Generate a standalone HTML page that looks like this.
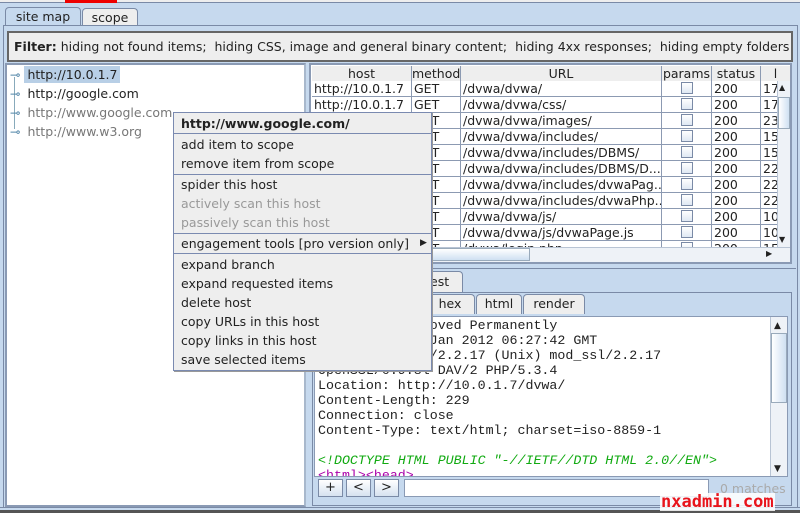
<!DOCTYPE html>
<html><head><meta charset="utf-8"><style>
*{margin:0;padding:0;box-sizing:border-box}
body{width:800px;height:513px;overflow:hidden;background:#c6d9ee;font-family:"DejaVu Sans","Liberation Sans",sans-serif;font-size:12px;color:#222;position:relative}
.a{position:absolute}
.t{white-space:nowrap}
.tab{position:absolute;background:#eee;border:1px solid #7a8aa6;border-bottom:none;border-radius:4px 4px 0 0;text-align:center;font-size:12.5px;line-height:17px}
.cell{position:absolute;height:16px;border-right:1px solid #8c9ab2;border-bottom:1px solid #8c9ab2;line-height:15px;padding-left:2px;white-space:nowrap;overflow:hidden;font-size:12.5px;background:#fff}
.hd{background:#eee;text-align:center;padding:0}
.cb{position:absolute;width:12px;height:12px;border:1px solid #7a8aa6;background:linear-gradient(#fff,#dfe8f3);left:19px;top:1px}
.mono{font-family:"Liberation Mono","DejaVu Sans Mono",monospace;font-size:13.3px;line-height:15px;white-space:pre}
.mi{position:absolute;left:7px;font-size:12.5px;white-space:nowrap}
.sep{position:absolute;left:0;width:258px;height:1px;background:#7a8ab0}
.btn{position:absolute;top:479px;height:18px;width:25px;border:1px solid #7a8aa6;background:linear-gradient(#fff,#d6e2f0);text-align:center;line-height:15px;font-size:13px}
.sbv{position:absolute;background:#eef2f7;border-left:1px solid #b8c4d4}
</style></head><body>
<div class="a" style="left:0;top:0;width:800px;height:3px;background:#eee;border-bottom:1px solid #7a8aa6"></div>
<div class="a" style="left:65px;top:0;width:52px;height:3px;background:#e00"></div>
<div class="tab" style="left:5px;top:7px;width:76px;height:19px;background:#c6d9ee">site map</div>
<div class="tab" style="left:82px;top:8px;width:56px;height:17px">scope</div>
<div class="a" style="left:3px;top:25px;width:795px;height:488px;border:1px solid #7a8aa6;border-bottom:none"></div>
<div class="a t" style="left:7px;top:31px;width:786px;height:31px;background:#eee;border:2px solid #666;line-height:27px;padding-left:5px;font-size:12.5px"><b>Filter:</b> hiding not found items;&nbsp; hiding CSS, image and general binary content;&nbsp; hiding 4xx responses;&nbsp; hiding empty folders</div>
<div class="a" style="left:5px;top:63px;width:301px;height:444px;background:#fff;border:2px solid #8a9ab4;border-right-color:#a8b8cc"></div>
<div class="a" style="left:14px;top:77px;width:1px;height:52px;background:#8ab"></div>
<div class="a t" style="left:10px;top:65px;font-size:12.5px;line-height:19px">
<div><span style="color:#58a">⊸</span> <span style="background:#b8cfe6;padding:1px 3px">http://10.0.1.7</span></div>
<div><span style="color:#58a">⊸</span> <span style="padding-left:3px">http://google.com</span></div>
<div style="color:#777"><span style="color:#58a">⊸</span> <span style="padding-left:3px">http://www.google.com</span></div>
<div style="color:#777"><span style="color:#58a">⊸</span> <span style="padding-left:3px">http://www.w3.org</span></div>
</div>
<div class="a" style="left:309px;top:63px;width:483px;height:201px;background:#fff;border:2px solid #8a9ab4"></div>
<div class="a" style="left:311px;top:65px;width:480px;height:182px;overflow:hidden">
<div class="cell hd" style="left:1px;top:1px;width:100px">host</div>
<div class="cell hd" style="left:101px;top:1px;width:49px">method</div>
<div class="cell hd" style="left:150px;top:1px;width:201px">URL</div>
<div class="cell hd" style="left:351px;top:1px;width:50px">params</div>
<div class="cell hd" style="left:401px;top:1px;width:49px">status</div>
<div class="cell hd" style="left:450px;top:1px;width:30px">l</div>
</div>
<div class="a" id="rows" style="left:311px;top:81px;width:466px;height:166px;overflow:hidden"></div>
<script>
var u=["/dvwa/dvwa/","/dvwa/dvwa/css/","/dvwa/dvwa/images/","/dvwa/dvwa/includes/","/dvwa/dvwa/includes/DBMS/","/dvwa/dvwa/includes/DBMS/D...","/dvwa/dvwa/includes/dvwaPag...","/dvwa/dvwa/includes/dvwaPhp...","/dvwa/dvwa/js/","/dvwa/dvwa/js/dvwaPage.js","/dvwa/login.php"];
var l=["17","17","23","15","15","22","22","22","10","10","15"];
var h="";
for(var i=0;i<u.length;i++){var y=i*16;
h+='<div class="cell" style="left:1px;top:'+y+'px;width:100px">http://10.0.1.7</div><div class="cell" style="left:101px;top:'+y+'px;width:49px">GET</div><div class="cell" style="left:150px;top:'+y+'px;width:201px">'+u[i]+'</div><div class="cell" style="left:351px;top:'+y+'px;width:50px"><div class="cb"></div></div><div class="cell" style="left:401px;top:'+y+'px;width:49px">200</div><div class="cell" style="left:450px;top:'+y+'px;width:20px">'+l[i]+'</div>';}
document.getElementById("rows").innerHTML=h;
</script>
<div class="sbv" style="left:777px;top:81px;width:13px;height:166px"></div>
<div class="a" style="left:778px;top:97px;width:12px;height:32px;background:linear-gradient(90deg,#fff,#cfe0f2);border:1px solid #9ab"></div>
<div class="a" style="left:779px;top:83px;font-size:8px">▲</div>
<div class="a" style="left:779px;top:235px;font-size:8px">▼</div>
<div class="a" style="left:311px;top:247px;width:479px;height:15px;background:#eef2f7;border-top:1px solid #b8c4d4"></div>
<div class="a" style="left:430px;top:248px;width:100px;height:13px;background:linear-gradient(#fff,#cfe0f2);border:1px solid #9ab"></div>
<div class="a" style="left:766px;top:249px;font-size:8px">▶</div>
<div class="a" style="left:309px;top:268px;width:487px;height:240px;border-top:1px solid #7a8aa6"></div>
<div class="tab" style="left:405px;top:271px;width:58px;height:22px;line-height:20px;text-align:left;padding-left:24px">est</div>
<div class="a" style="left:312px;top:292px;width:480px;height:214px;border:1px solid #7a8aa6;background:#c6d9ee"></div>
<div class="tab" style="left:425px;top:294px;width:50px;height:20px">hex</div>
<div class="tab" style="left:476px;top:294px;width:46px;height:20px">html</div>
<div class="tab" style="left:523px;top:294px;width:62px;height:20px">render</div>
<div class="a" style="left:314px;top:316px;width:474px;height:161px;background:#fff;border:1px solid #8a9ab4"></div>
<div class="a mono" style="left:318px;top:318px;width:452px;height:158px;overflow:hidden">HTTP/1.1 301 Moved Permanently
Date: Sat, 28 Jan 2012 06:27:42 GMT
Server: Apache/2.2.17 (Unix) mod_ssl/2.2.17
OpenSSL/0.9.8l DAV/2 PHP/5.3.4
Location: http://10.0.1.7/dvwa/
Content-Length: 229
Connection: close
Content-Type: text/html; charset=iso-8859-1

<i style="color:#1a1">&lt;!DOCTYPE HTML PUBLIC "-//IETF//DTD HTML 2.0//EN"&gt;</i>
<span style="color:#a0a">&lt;html&gt;&lt;head&gt;</span></div>
<div class="sbv" style="left:770px;top:317px;width:17px;height:159px"></div>
<div class="a" style="left:771px;top:333px;width:16px;height:70px;background:linear-gradient(90deg,#fff,#cfe0f2);border:1px solid #9ab"></div>
<div class="a" style="left:774px;top:321px;font-size:9px">▲</div>
<div class="a" style="left:774px;top:464px;font-size:9px">▼</div>
<div class="btn" style="left:318px">+</div>
<div class="btn" style="left:346px">&lt;</div>
<div class="btn" style="left:374px">&gt;</div>
<div class="a" style="left:404px;top:479px;width:305px;height:18px;background:#fff;border:1px solid #8a9ab4"></div>
<div class="a t" style="left:720px;top:481px;color:#aaa;font-size:12.5px">0 matches</div>
<div class="a" style="left:0;top:507px;width:800px;height:6px;background:#c6d9ee;border-top:1px solid #7a8aa6"></div>
<div class="a" style="left:0;top:510px;width:800px;height:3px;background:#555"></div>
<div class="a t" style="left:660px;top:493px;color:#e8141c;font-weight:bold;font-size:17px;font-family:'DejaVu Sans Mono','Liberation Mono',monospace;background:rgba(255,255,255,.85);padding:0 1px;line-height:18px;letter-spacing:0px">nxadmin.com</div>
<div class="a" style="left:173px;top:112px;width:259px;height:259px;background:#eee;border:1px solid #7a8ab0;box-shadow:1px 1px 0 #999">
<div class="mi" style="top:3px;font-weight:bold">http://www.google.com/</div>
<div class="sep" style="top:20px"></div>
<div class="mi" style="top:24px">add item to scope</div>
<div class="mi" style="top:43px">remove item from scope</div>
<div class="sep" style="top:61px"></div>
<div class="mi" style="top:64px">spider this host</div>
<div class="mi" style="top:83px;color:#999">actively scan this host</div>
<div class="mi" style="top:102px;color:#999">passively scan this host</div>
<div class="sep" style="top:120px"></div>
<div class="mi" style="top:123px">engagement tools [pro version only]</div>
<div class="a" style="left:246px;top:125px;font-size:9px">▶</div>
<div class="sep" style="top:140px"></div>
<div class="mi" style="top:144px">expand branch</div>
<div class="mi" style="top:163px">expand requested items</div>
<div class="mi" style="top:182px">delete host</div>
<div class="mi" style="top:201px">copy URLs in this host</div>
<div class="mi" style="top:220px">copy links in this host</div>
<div class="mi" style="top:239px">save selected items</div>
</div>
</body></html>
